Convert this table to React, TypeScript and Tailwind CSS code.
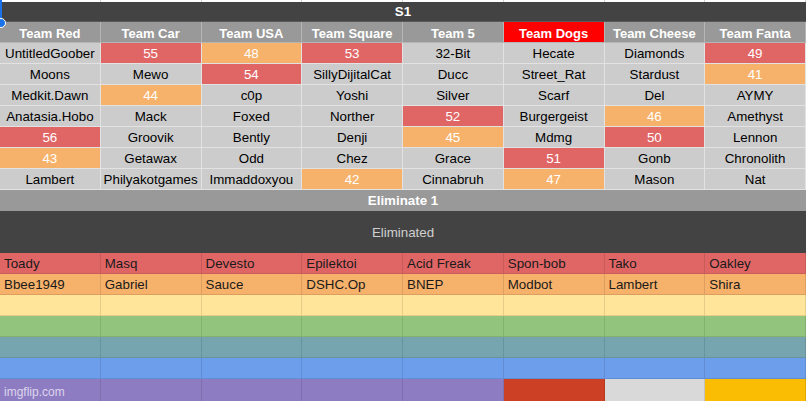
import React from "react";

type Cell = { t: string; c?: "r" | "o" };

const headers = ["Team Red", "Team Car", "Team USA", "Team Square", "Team 5", "Team Dogs", "Team Cheese", "Team Fanta"];

const rows: Cell[][] = [
  [{ t: "UntitledGoober" }, { t: "55", c: "r" }, { t: "48", c: "o" }, { t: "53", c: "r" }, { t: "32-Bit" }, { t: "Hecate" }, { t: "Diamonds" }, { t: "49", c: "r" }],
  [{ t: "Moons" }, { t: "Mewo" }, { t: "54", c: "r" }, { t: "SillyDijitalCat" }, { t: "Ducc" }, { t: "Street_Rat" }, { t: "Stardust" }, { t: "41", c: "o" }],
  [{ t: "Medkit.Dawn" }, { t: "44", c: "o" }, { t: "c0p" }, { t: "Yoshi" }, { t: "Silver" }, { t: "Scarf" }, { t: "Del" }, { t: "AYMY" }],
  [{ t: "Anatasia.Hobo" }, { t: "Mack" }, { t: "Foxed" }, { t: "Norther" }, { t: "52", c: "r" }, { t: "Burgergeist" }, { t: "46", c: "o" }, { t: "Amethyst" }],
  [{ t: "56", c: "r" }, { t: "Groovik" }, { t: "Bently" }, { t: "Denji" }, { t: "45", c: "o" }, { t: "Mdmg" }, { t: "50", c: "r" }, { t: "Lennon" }],
  [{ t: "43", c: "o" }, { t: "Getawax" }, { t: "Odd" }, { t: "Chez" }, { t: "Grace" }, { t: "51", c: "r" }, { t: "Gonb" }, { t: "Chronolith" }],
  [{ t: "Lambert" }, { t: "Philyakotgames" }, { t: "Immaddoxyou" }, { t: "42", c: "o" }, { t: "Cinnabruh" }, { t: "47", c: "o" }, { t: "Mason" }, { t: "Nat" }],
];

const elimRed = ["Toady", "Masq", "Devesto", "Epilektoi", "Acid Freak", "Spon-bob", "Tako", "Oakley"];
const elimOrange = ["Bbee1949", "Gabriel", "Sauce", "DSHC.Op", "BNEP", "Modbot", "Lambert", "Shira"];

const font = { fontFamily: '"Liberation Sans", Arial, sans-serif' };

export default function App() {
  const eight = [0, 1, 2, 3, 4, 5, 6, 7];
  return (
    <div className="relative w-[806px] h-[401px] overflow-hidden bg-white text-[13.33px] leading-none" style={font}>
      {/* top white strip */}
      <div className="grid grid-cols-8 h-[2px]">
        {eight.map((i) => (
          <div key={i} className="border-r border-[#d0d0d0]" />
        ))}
      </div>
      {/* S1 */}
      <div className="h-[20px] pt-[1px] bg-[#434343] text-white font-bold text-[13.33px] flex items-center justify-center border-b border-[#5a5a5a]">
        S1
      </div>
      {/* headers */}
      <div className="grid grid-cols-8 h-[21px]">
        {headers.map((h, i) => (
          <div
            key={h}
            className={`flex items-center justify-center pt-[2px] text-white font-bold text-[13px] border-r border-b border-[#b5b5b5] ${i === 5 ? "bg-[#ff0000]" : "bg-[#999999]"}`}
          >
            {h}
          </div>
        ))}
      </div>
      {/* data rows */}
      {rows.map((r, ri) => (
        <div key={ri} className="grid grid-cols-8 h-[21px]">
          {r.map((c, ci) => (
            <div
              key={ci}
              className={`flex items-center justify-center pt-[2px] border-r border-b border-[#e2e2e2] text-[13.33px] ${
                c.c === "r" ? "bg-[#e06666] text-white" : c.c === "o" ? "bg-[#f6b26b] text-white" : "bg-[#cccccc] text-black"
              }`}
            >
              {c.t}
            </div>
          ))}
        </div>
      ))}
      {/* Eliminate 1 */}
      <div className="h-[21px] pt-[1px] bg-[#999999] text-white font-bold text-[13.33px] flex items-center justify-center">
        Eliminate 1
      </div>
      {/* Eliminated */}
      <div className="h-[42px] pt-[1px] bg-[#434343] text-[#d0d0d0] text-[13.33px] flex items-center justify-center">
        Eliminated
      </div>
      {/* red */}
      <div className="grid grid-cols-8 h-[21px] bg-[#e06666]">
        {elimRed.map((t, i) => (
          <div key={i} className="flex items-center pl-[4px] pt-[2px] border-r border-b border-black/10 text-[13.33px] text-[#1a1a1a]">
            {t}
          </div>
        ))}
      </div>
      <div className="grid grid-cols-8 h-[21px] bg-[#f6b26b]">
        {elimOrange.map((t, i) => (
          <div key={i} className="flex items-center pl-[4px] pt-[2px] border-r border-b border-black/10 text-[13.33px] text-[#1a1a1a]">
            {t}
          </div>
        ))}
      </div>
      <div className="grid grid-cols-8 h-[21px] bg-[#ffe599]">
        {eight.map((i) => (
          <div key={i} className="border-r border-b border-black/10" />
        ))}
      </div>
      <div className="grid grid-cols-8 h-[21px] bg-[#93c47d]">
        {eight.map((i) => (
          <div key={i} className="border-r border-b border-black/10" />
        ))}
      </div>
      <div className="grid grid-cols-8 h-[21px] bg-[#76a5af]">
        {eight.map((i) => (
          <div key={i} className="border-r border-b border-black/10" />
        ))}
      </div>
      <div className="grid grid-cols-8 h-[21px] bg-[#6d9eeb]">
        {eight.map((i) => (
          <div key={i} className="border-r border-b border-black/10" />
        ))}
      </div>
      <div className="grid grid-cols-8 h-[22px]">
        {eight.map((i) => (
          <div
            key={i}
            className={`border-r border-black/10 ${
              i === 5 ? "bg-[#cc4125]" : i === 6 ? "bg-[#d9d9d9]" : i === 7 ? "bg-[#fbbc04]" : "bg-[#8e7cc3]"
            }`}
          />
        ))}
      </div>
      {/* watermark */}
      <div className="absolute left-[4px] bottom-[3px] text-[12px] text-white/70">imgflip.com</div>
      {/* selection handle */}
      <div className="absolute left-0 top-0 w-[2px] h-[22px] bg-[#1a73e8]" />
      <div className="absolute left-[-4px] top-[18px] w-[10px] h-[10px] rounded-full bg-[#1a73e8] border border-white" />
    </div>
  );
}
